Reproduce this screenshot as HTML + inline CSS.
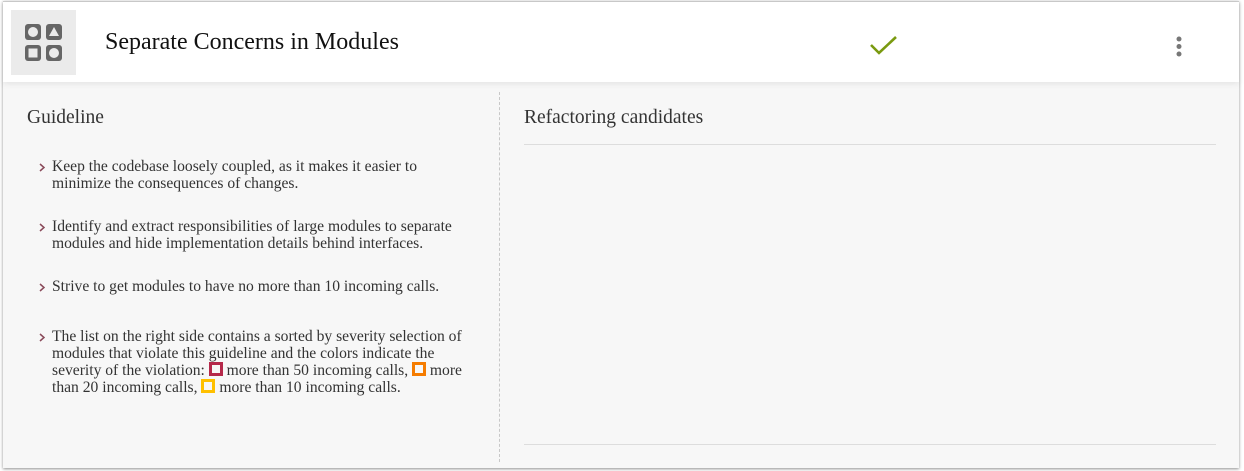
<!DOCTYPE html>
<html><head><meta charset="utf-8"><style>
html,body{margin:0;padding:0;width:1244px;height:471px;overflow:hidden;background:#fff;font-family:"Liberation Serif",serif;}
.card{position:absolute;left:3px;top:1px;width:1236px;height:466px;background:#f7f7f7;box-shadow:0 1px 3px rgba(0,0,0,.45);border-top:1px solid #ccc;}
.hdr{position:absolute;left:0;top:0;width:1236px;height:80px;background:#fff;box-shadow:0 2px 6px rgba(0,0,0,.08);}
.logo{position:absolute;left:8px;top:8px;width:65px;height:65px;background:#ebebeb;}
.title{position:absolute;left:102px;top:27px;font-size:24px;color:#111;}
.left h2,.right h2{font-weight:normal;font-size:19.5px;color:#333;margin:0;position:absolute;}
.dash{position:absolute;left:496px;top:90px;height:370px;border-left:1px dashed #c8c8c8;}
.item{position:absolute;left:49px;width:416px;font-size:15.6px;line-height:17px;color:#333;}
.chev{position:absolute;left:-13px;top:5px;}
.sq{display:inline-block;width:8px;height:8px;border:3px solid;vertical-align:-1px;}
.hr{position:absolute;left:521px;width:692px;border-top:1px solid #ddd;}
</style></head><body>
<div class="card">
 <div class="hdr">
  <div class="logo"><svg width="65" height="65" viewBox="0 0 65 65">
   <rect x="14" y="14" width="16" height="16" rx="3" fill="#666"/><circle cx="22" cy="22" r="5" fill="#ebebeb"/>
   <rect x="35" y="14" width="16" height="16" rx="3" fill="#666"/><polygon points="43,17 48,26 38,26" fill="#ebebeb"/>
   <rect x="14" y="35" width="16" height="16" rx="3" fill="#666"/><rect x="17.5" y="38.5" width="9" height="9" fill="#ebebeb"/>
   <rect x="35" y="35" width="16" height="16" rx="3" fill="#666"/><circle cx="43" cy="43" r="5" fill="#ebebeb"/>
  </svg></div>
  <div class="title">Separate Concerns in Modules</div>
  <svg style="position:absolute;left:866px;top:32px" width="30" height="22" viewBox="0 0 30 22"><path d="M2 11 L10 19 L27 3" fill="none" stroke="#7a9a10" stroke-width="2.6"/></svg>
  <svg style="position:absolute;left:1172px;top:33px" width="8" height="24"><circle cx="4" cy="4" r="2.5" fill="#777"/><circle cx="4" cy="11.5" r="2.5" fill="#777"/><circle cx="4" cy="19" r="2.5" fill="#777"/></svg>
 </div>
 <div class="left">
  <h2 style="left:24px;top:105px">Guideline</h2>
  <div class="item" style="top:156px"><svg class="chev" width="6" height="9"><path d="M1 1 L5 4.5 L1 8" fill="none" stroke="#8a4a5a" stroke-width="1.5"/></svg>Keep the codebase loosely coupled, as it makes it easier to minimize the consequences of changes.</div>
  <div class="item" style="top:216px"><svg class="chev" width="6" height="9"><path d="M1 1 L5 4.5 L1 8" fill="none" stroke="#8a4a5a" stroke-width="1.5"/></svg>Identify and extract responsibilities of large modules to separate modules and hide implementation details behind interfaces.</div>
  <div class="item" style="top:276px"><svg class="chev" width="6" height="9"><path d="M1 1 L5 4.5 L1 8" fill="none" stroke="#8a4a5a" stroke-width="1.5"/></svg>Strive to get modules to have no more than 10 incoming calls.</div>
  <div class="item" style="top:326px"><svg class="chev" width="6" height="9"><path d="M1 1 L5 4.5 L1 8" fill="none" stroke="#8a4a5a" stroke-width="1.5"/></svg>The list on the right side contains a sorted by severity selection of modules that violate this guideline and the colors indicate the severity of the violation: <span class="sq" style="border-color:#b5284a"></span> more than 50 incoming calls, <span class="sq" style="border-color:#f57c00"></span> more than 20 incoming calls, <span class="sq" style="border-color:#ffc000"></span> more than 10 incoming calls.</div>
 </div>
 <div class="dash"></div>
 <div class="right">
  <h2 style="left:521px;top:105px">Refactoring candidates</h2>
  <div class="hr" style="top:142px"></div>
  <div class="hr" style="top:442px"></div>
 </div>
</div>
</body></html>
